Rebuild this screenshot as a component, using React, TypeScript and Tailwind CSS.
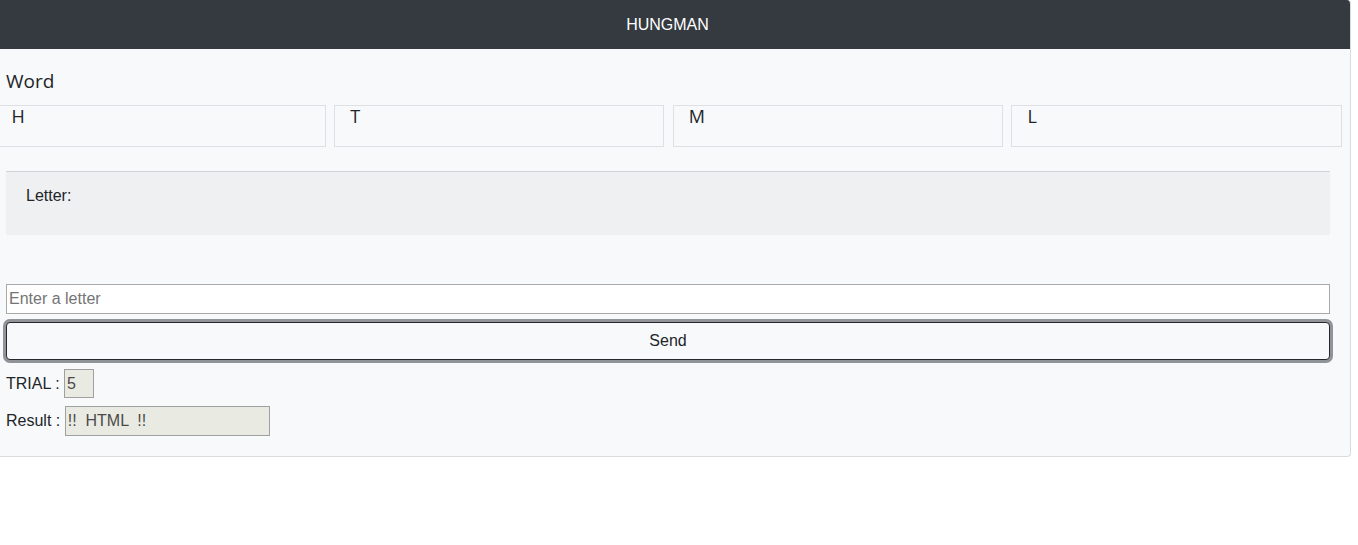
export default function App() {
  const letters = ['H', 'T', 'M', 'L']

  return (
    <div className="w-[1351px] overflow-hidden rounded-r-[4px] border-r border-b border-[#dadbde] bg-[#f8f9fa] text-[#212529] font-['Liberation_Sans',Arial,sans-serif]">
      <div className="flex h-[49px] items-center justify-center bg-[#343a40] pl-[6px] pr-[21px] text-[16px] text-white">
        HUNGMAN
      </div>
      <div className="pl-[6px] pb-[20px]">
        <div className="mt-[20px] font-['Open_Sans',sans-serif] text-[19px] leading-[24px]">Word</div>
        <div className="-ml-[10.5px] mt-[12px] grid w-[1346px] grid-cols-4 gap-x-[8.5px]">
          {letters.map((l) => (
            <div key={l} className="h-[42px] border border-[#dee0e4] pl-[15px] font-['Open_Sans',sans-serif] text-[18px] leading-[20px]">
              {l}
            </div>
          ))}
        </div>

        <div className="mt-[24px] h-[64px] w-[1324px] border-t border-[#d2d3d7] bg-[#eff0f2] pl-[20px] pt-[12px] text-[16px] leading-[24px]">
          Letter:
        </div>

        <input
          className="mt-[49px] block h-[30px] w-[1324px] border border-[#a9a9a9] bg-white px-[2px] text-[16px] placeholder:text-[#757575] focus:outline-none"
          placeholder="Enter a letter"
        />
        <button className="mt-[8px] block h-[38px] w-[1324px] rounded-[4px] border border-[#26282c] bg-[#f8f9fa] text-[16px] ring-[3px] ring-[#909398]">
          Send
        </button>

        <div className="mt-[9px] flex items-center text-[16px] whitespace-pre">
          {'TRIAL : '}
          <input
            readOnly
            value="5"
            className="h-[29px] w-[30px] border border-[#a0a0a0] bg-[#e9ebe3] pl-[2px] text-[16px] text-[#4a4a4a] focus:outline-none"
          />
        </div>
        <div className="mt-[8px] flex items-center text-[16px] whitespace-pre">
          {'Result : '}
          <input
            readOnly
            value="!!  HTML  !!"
            className="h-[30px] w-[205px] border border-[#a0a0a0] bg-[#e9ebe3] pl-[2px] text-[16px] text-[#4a4a4a] focus:outline-none"
          />
        </div>
      </div>
    </div>
  )
}
